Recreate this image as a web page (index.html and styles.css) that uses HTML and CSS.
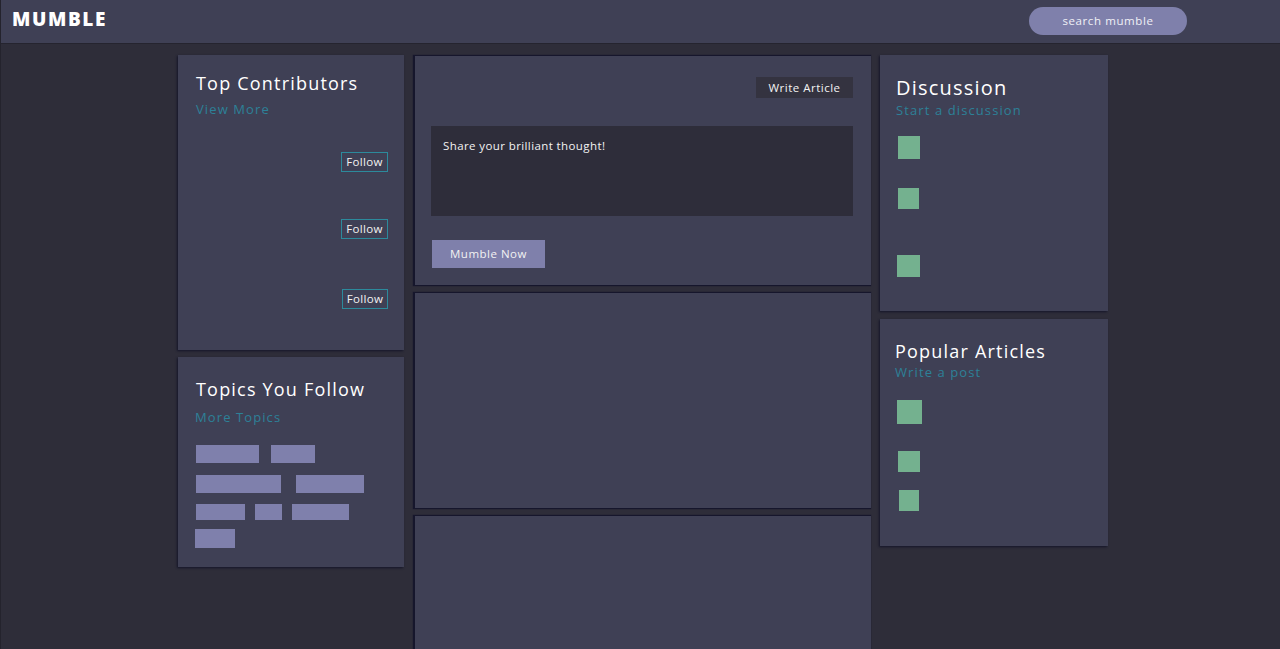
FILE: index.html
```html
<!DOCTYPE html>
<html>
<head>
<meta charset="utf-8">
<title>Mumble</title>
<link rel="stylesheet" href="styles.css">
</head>
<body>
<header class="topbar">
  <div class="logo">MUMBLE</div>
  <div class="search">search mumble</div>
</header>
<main class="layout">
  <section class="col col-left">
    <div class="card contributors">
      <h3 class="card-title">Top Contributors</h3>
      <a class="card-link">View More</a>
      <div class="follow-list">
        <div class="follow-row r1"><span class="follow-btn">Follow</span></div>
        <div class="follow-row r2"><span class="follow-btn">Follow</span></div>
        <div class="follow-row r3"><span class="follow-btn">Follow</span></div>
      </div>
    </div>
    <div class="card topics">
      <h3 class="card-title">Topics You Follow</h3>
      <a class="card-link">More Topics</a>
      <div class="tags">
        <div class="tag-row"><span class="tag" style="width:63px"></span><span class="tag" style="width:44px"></span></div>
        <div class="tag-row"><span class="tag" style="width:85px"></span><span class="tag" style="width:68px"></span></div>
        <div class="tag-row"><span class="tag" style="width:49px"></span><span class="tag" style="width:27px"></span><span class="tag" style="width:57px"></span></div>
        <div class="tag-row"><span class="tag" style="width:40px"></span></div>
      </div>
    </div>
  </section>
  <section class="col col-mid">
    <div class="card composer">
      <div class="composer-top"><span class="write-btn">Write Article</span></div>
      <div class="thought">Share your brilliant thought!</div>
      <span class="mumble-btn">Mumble Now</span>
    </div>
    <div class="card feed f1"></div>
    <div class="card feed f2"></div>
  </section>
  <section class="col col-right">
    <div class="card discussion">
      <h3 class="card-title big">Discussion</h3>
      <a class="card-link tight">Start a discussion</a>
      <div class="sq-list">
        <span class="sq d1"></span>
        <span class="sq d2"></span>
        <span class="sq d3"></span>
      </div>
    </div>
    <div class="card popular">
      <h3 class="card-title">Popular Articles</h3>
      <a class="card-link tight">Write a post</a>
      <div class="sq-list">
        <span class="sq p1"></span>
        <span class="sq p2"></span>
        <span class="sq p3"></span>
      </div>
    </div>
  </section>
</main>
</body>
</html>
```
FILE: styles.css
```css
* { box-sizing: border-box; }
html, body { margin: 0; padding: 0; }
body {
  background: #2e2d39;
  font-family: "Open Sans", "DejaVu Sans", sans-serif;
  color: #fff;
  height: 649px;
  overflow: hidden;
  border-left: 1px solid #24232d;
}
.topbar {
  height: 44px;
  background: #3f4055;
  border-bottom: 1px solid #25242f;
  display: flex;
  align-items: center;
  padding-left: 11px;
}
.logo {
  font-weight: 800;
  font-size: 19px;
  letter-spacing: 1.6px;
  color: #fff;
  margin-top: -6px;
}
.search {
  margin-left: auto;
  margin-right: 93px;
  width: 158px;
  height: 28px;
  border-radius: 14px;
  background: #7f80ab;
  color: #f0f0f6;
  font-size: 11.5px;
  letter-spacing: 0.6px;
  display: flex;
  align-items: center;
  justify-content: center;
  margin-top: -2px;
}
.layout {
  display: flex;
  align-items: flex-start;
  padding-left: 177px;
  padding-top: 11px;
}
.col { display: flex; flex-direction: column; }
.col-left { width: 226px; gap: 7px; }
.col-mid { width: 456px; margin-left: 11px; gap: 8px; margin-top: 1px; }
.col-right { width: 228px; margin-left: 9px; gap: 8px; }
.card {
  background: #3f4055;
  box-shadow: -1px 1px 2px 0 #15152a;
}
.card-title {
  margin: 0;
  font-weight: 400;
  font-size: 18px;
  line-height: 24px;
  letter-spacing: 1.2px;
  color: #fff;
}
.card-title.big { font-size: 20px; }
.card-link {
  display: block;
  color: #2d8198;
  font-size: 13px;
  letter-spacing: 1.1px;
  line-height: 18px;
  margin-top: 5px;
}
.card-link.tight { margin-top: 0; }

/* contributors */
.contributors { height: 295px; padding: 16px 16px 0 18px; }
.follow-list { display: flex; flex-direction: column; }
.follow-row { display: flex; justify-content: flex-end; }
.follow-row.r1 { margin-top: 34px; }
.follow-row.r2 { margin-top: 47px; }
.follow-row.r3 { margin-top: 50px; }
.follow-btn {
  border: 1px solid #2c8a9c;
  font-size: 11.5px;
  line-height: 18px;
  width: 47px;
  text-align: center;
  color: #f2f2f2;
  letter-spacing: 0.3px;
}
.follow-row.r3 .follow-btn { width: 46px; }

/* topics */
.topics { height: 210px; padding: 20px 16px 0 17px; }
.topics .card-title { padding-left: 1px; }
.topics .card-link { margin-top: 7px; }
.tags { margin-top: 19px; display: flex; flex-direction: column; padding-left: 1px; }
.tag-row { display: flex; gap: 12px; }
.tag-row:nth-child(2) { gap: 15px; margin-top: 12px; }
.tag-row:nth-child(3) { gap: 10px; margin-top: 11px; }
.tag-row:nth-child(3) .tag { height: 16px; }
.tag-row:nth-child(4) { margin-left: -1px; margin-top: 9px; }
.tag-row:nth-child(4) .tag { height: 19px; }
.tag { display: block; height: 18px; background: #7f80ac; }

/* composer */
.composer {
  height: 229px;
  padding: 21px 18px 0 16px;
  box-shadow: -1px 0 1px 1px #16162c;
}
.composer-top { display: flex; justify-content: flex-end; }
.write-btn {
  background: #343340;
  font-size: 11.5px;
  line-height: 21px;
  width: 97px;
  text-align: center;
  color: #f2f2f2;
  letter-spacing: 0.5px;
}
.thought {
  margin-top: 28px;
  height: 90px;
  background: #2e2d3a;
  font-size: 11.5px;
  color: #f2f2f2;
  padding: 12px 12px;
  letter-spacing: 0.4px;
  line-height: 16px;
}
.mumble-btn {
  display: inline-flex;
  align-items: center;
  justify-content: center;
  margin-top: 24px;
  margin-left: 1px;
  width: 113px;
  height: 28px;
  background: #7f80ab;
  font-size: 11.5px;
  color: #f2f2f2;
  letter-spacing: 0.5px;
  padding-bottom: 2px;
}
.feed { box-shadow: -1px 0 1px 1px #16162c; }
.feed.f1 { height: 215px; }
.feed.f2 { height: 134px; }

/* right */
.discussion { height: 256px; padding: 20px 16px 0 16px; }
.discussion .card-title { line-height: 26px; }
.popular { height: 227px; padding: 20px 16px 0 15px; }
.sq-list { display: flex; flex-direction: column; align-items: flex-start; }
.sq { display: block; background: #74b18f; }
.sq.d1 { width: 22px; height: 23px; margin-top: 17px; margin-left: 2px; }
.sq.d2 { width: 21px; height: 21px; margin-top: 29px; margin-left: 2px; }
.sq.d3 { width: 23px; height: 22px; margin-top: 46px; margin-left: 1px; }
.sq.p1 { width: 25px; height: 24px; margin-top: 19px; margin-left: 2px; }
.sq.p2 { width: 22px; height: 21px; margin-top: 27px; margin-left: 3px; }
.sq.p3 { width: 20px; height: 21px; margin-top: 18px; margin-left: 4px; }
```
